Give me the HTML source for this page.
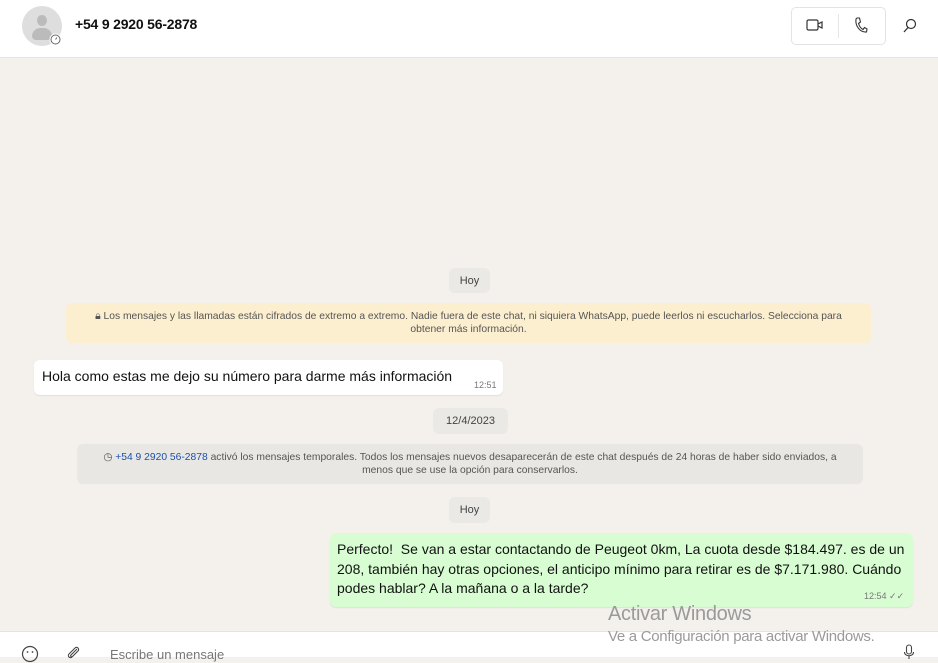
<!DOCTYPE html>
<html><head><meta charset="utf-8"><style>
*{margin:0;padding:0;box-sizing:border-box}
body{width:938px;height:657px;overflow:hidden;background:#f4f1ed;font-family:"Liberation Sans",sans-serif;position:relative;color:#111}
.a{position:absolute}
.hdr{left:0;top:0;width:938px;height:58px;background:#fff;border-bottom:1px solid #e6e6e6}
.pill{background:#ebe9e6;border-radius:6px;font-size:11px;color:#444;text-align:center;line-height:26px}
.sys{font-size:10.3px;color:#555;text-align:center;line-height:13px;padding:7px 4px;border-radius:6px;white-space:nowrap}
.t{font-size:14px;line-height:19.5px;white-space:nowrap}
.time{font-size:9px;color:#777}
</style></head><body>
<div class="a hdr"></div>
<div class="a" style="left:22px;top:6px;width:40px;height:40px;border-radius:50%;background:#dedede;overflow:hidden">
 <div class="a" style="left:15px;top:9px;width:10px;height:11px;border-radius:50%;background:#bbb"></div>
 <div class="a" style="left:10px;top:22px;width:20px;height:12px;border-radius:9px 9px 4px 4px;background:#bbb"></div>
</div>
<svg class="a" style="left:49px;top:33px" width="13" height="13" viewBox="0 0 13 13"><circle cx="6.5" cy="6.5" r="6" fill="#fff"/><circle cx="6.5" cy="6.5" r="4.5" fill="none" stroke="#666" stroke-width="1"/><path d="M6.5 6.5 L8 4.5" stroke="#666"/></svg>
<div class="a" style="left:75px;top:16px;font-size:14px;font-weight:bold;letter-spacing:-0.2px;color:#111">+54 9 2920 56-2878</div>
<div class="a" style="left:791px;top:7px;width:95px;height:38px;border:1px solid #e3e3e3;border-radius:5px;background:#fff"></div>
<div class="a" style="left:838px;top:14px;width:1px;height:24px;background:#e6e6e6"></div>
<svg class="a" style="left:806px;top:18px" width="18" height="14" viewBox="0 0 18 14"><rect x="1" y="2" width="11" height="10" rx="1.5" fill="none" stroke="#333" stroke-width="1.2"/><path d="M12 6 L16 4 V10 L12 8" fill="none" stroke="#333" stroke-width="1.2"/></svg>
<svg class="a" style="left:854px;top:17px" width="14" height="17" viewBox="0 0 14 17"><path d="M3 1 L5.5 1 L6.5 5 L4.5 6.5 C5.5 9.5 7 11.5 9 12.5 L10.5 10.5 L13 12 L12.5 15 C6 15.5 1 9 2 2 Z" fill="none" stroke="#333" stroke-width="1.1"/></svg>
<svg class="a" style="left:902px;top:18px" width="16" height="16" viewBox="0 0 16 16"><circle cx="9" cy="6" r="4.5" fill="none" stroke="#333" stroke-width="1.2"/><path d="M6 9.5 L2 14" stroke="#333" stroke-width="1.3"/></svg>

<div class="a pill" style="left:449px;top:268px;width:41px;height:25px">Hoy</div>
<div class="a sys" style="left:66px;top:303px;width:805px;height:40px;background:#fcefcf">🔒︎ Los mensajes y las llamadas están cifrados de extremo a extremo. Nadie fuera de este chat, ni siquiera WhatsApp, puede leerlos ni escucharlos. Selecciona para<br>obtener más información.</div>
<div class="a" style="left:34px;top:360px;width:469px;height:35px;background:#fff;border-radius:6px;box-shadow:0 1px 1px rgba(0,0,0,.08)">
 <div class="a t" style="left:8px;top:7px">Hola como estas me dejo su número para darme más información</div>
 <div class="a time" style="left:440px;top:20px">12:51</div>
</div>
<div class="a pill" style="left:433px;top:408px;width:75px;height:26px">12/4/2023</div>
<div class="a sys" style="left:77px;top:444px;width:786px;height:40px;background:#e9e7e4">◷ <span style="color:#1b4fa8">+54 9 2920 56-2878</span> activó los mensajes temporales. Todos los mensajes nuevos desaparecerán de este chat después de 24 horas de haber sido enviados, a<br>menos que se use la opción para conservarlos.</div>
<div class="a pill" style="left:449px;top:497px;width:41px;height:26px">Hoy</div>
<div class="a" style="left:330px;top:533px;width:583px;height:74px;background:#d9fdd3;border-radius:6px;box-shadow:0 1px 1px rgba(0,0,0,.08)">
 <div class="a t" style="left:7px;top:7px">Perfecto!&nbsp; Se van a estar contactando de Peugeot 0km, La cuota desde $184.497. es de un<br>208, también hay otras opciones, el anticipo mínimo para retirar es de $7.171.980. Cuándo<br>podes hablar? A la mañana o a la tarde?</div>
 <div class="a time" style="left:534px;top:58px">12:54 ✓✓</div>
</div>
<div class="a" style="left:0;top:631px;width:938px;height:26px;background:#fff;border-top:1px solid #e3e3e3"></div>
<div class="a" style="left:608px;top:603px;font-size:20px;color:#9a9a9a;letter-spacing:-0.3px">Activar Windows</div>
<div class="a" style="left:608px;top:628px;font-size:15px;color:#9a9a9a;letter-spacing:-0.3px">Ve a Configuración para activar Windows.</div>
<svg class="a" style="left:21px;top:645px" width="18" height="18" viewBox="0 0 18 18"><circle cx="9" cy="9" r="7.5" fill="none" stroke="#444" stroke-width="1.2"/><circle cx="6.5" cy="7" r=".9" fill="#444"/><circle cx="11.5" cy="7" r=".9" fill="#444"/></svg>
<svg class="a" style="left:65px;top:645px" width="16" height="16" viewBox="0 0 16 16"><path d="M12 4 L6 10 C5 11 6.5 12.5 7.5 11.5 L13 6 C15 4 12 1 10 3 L4 9 C2 11 5 14 7 12" fill="none" stroke="#444" stroke-width="1.1"/></svg>
<div class="a" style="left:110px;top:647px;font-size:13px;color:#777">Escribe un mensaje</div>
<svg class="a" style="left:903px;top:644px" width="12" height="16" viewBox="0 0 12 16"><rect x="3.5" y="1" width="5" height="9" rx="2.5" fill="none" stroke="#444" stroke-width="1.1"/><path d="M1.5 8 C1.5 13 10.5 13 10.5 8 M6 12 V15" fill="none" stroke="#444" stroke-width="1.1"/></svg>
</body></html>
